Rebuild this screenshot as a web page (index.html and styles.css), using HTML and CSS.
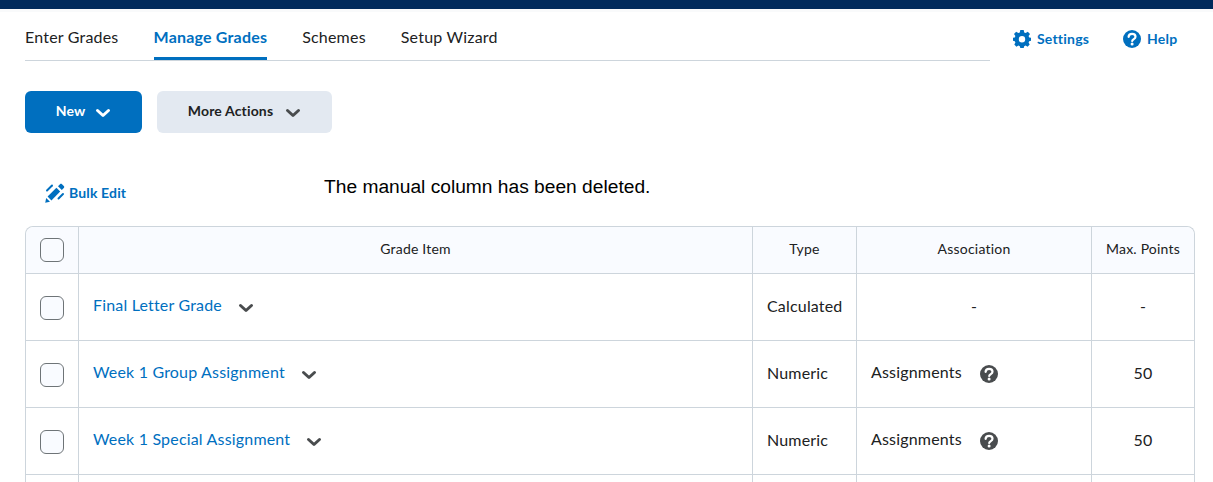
FILE: index.html
```html
<!DOCTYPE html>
<html lang="en">
<head>
  <meta charset="UTF-8" />
  <title>Manage Grades</title>
  <link rel="stylesheet" href="styles.css">
</head>
<body>

<svg class="icon-defs" aria-hidden="true">
  <symbol id="chevron" viewBox="0 0 16 10">
    <path d="M2.5 2.5 L8 7.5 L13.5 2.5" fill="none" stroke="currentColor" stroke-width="3" stroke-linecap="round" stroke-linejoin="round"/>
  </symbol>
  <symbol id="help" viewBox="0 0 18 18">
    <circle cx="9" cy="9" r="9" fill="currentColor"/>
    <path d="M5.6 6.9 C5.7 4.9 7.2 3.8 9.1 3.8 C11.1 3.8 12.5 5 12.5 6.7 C12.5 9 9.4 9 9.2 11" fill="none" stroke="#fff" stroke-width="2.2" stroke-linecap="round"/>
    <circle cx="9.1" cy="14" r="1.5" fill="#fff"/>
  </symbol>
</svg>

<div class="topstrip"></div>

<div class="header">
  <div class="tabs">
    <a class="tab">Enter Grades</a>
    <a class="tab active">Manage Grades</a>
    <a class="tab">Schemes</a>
    <a class="tab">Setup Wizard</a>
  </div>
  <div class="header-links">
    <a class="header-link">
      <svg class="icon-18" viewBox="0 0 18 18">
        <path fill="currentColor" fill-rule="evenodd" d="M7.3 0 H10.7 L11.2 2.5 L12.7 3.1 L14.8 1.7 L17 3.9 L15.6 6 L16.2 7.4 L18 7.8 V10.8 L16.2 11.2 L15.6 12.6 L16.7 14.6 L14.6 16.7 L12.6 15.6 L11.2 16.2 L10.7 18 H7.3 L6.8 16.2 L5.4 15.6 L3.4 16.7 L1.3 14.6 L2.4 12.6 L1.8 11.2 L0 10.8 V7.8 L1.8 7.4 L2.4 6 L1 3.9 L3.2 1.7 L5.3 3.1 L6.8 2.5 Z M9 6 A3.2 3.2 0 1 0 9 12.4 A3.2 3.2 0 1 0 9 6 Z"/>
      </svg>
      Settings
    </a>
    <a class="header-link">
      <svg class="icon-18"><use href="#help"/></svg>
      Help
    </a>
  </div>
</div>

<div class="actions">
  <button class="btn btn-primary"><span>New</span><svg class="chevron"><use href="#chevron"/></svg></button>
  <button class="btn btn-secondary"><span>More Actions</span><svg class="chevron"><use href="#chevron"/></svg></button>
</div>

<div class="toolbar">
  <a class="bulk-edit">
    <svg class="bulk-icon" viewBox="0 0 20 20">
      <path fill="currentColor" d="M0.2 19.8 L1.2 15 L5 18.8 Z"/>
      <path fill="currentColor" d="M2.6 13.6 L11.4 4.8 L15.2 8.6 L6.4 17.4 Z"/>
      <path fill="currentColor" d="M13 3.2 L15 1.2 C15.6 0.6 16.4 0.6 17 1.2 L18.8 3 C19.4 3.6 19.4 4.4 18.8 5 L16.8 7 Z"/>
      <path d="M2 7.5 L7 2.5" fill="none" stroke="currentColor" stroke-width="2" stroke-linecap="round"/>
      <path d="M13.5 15.5 L18 11" fill="none" stroke="currentColor" stroke-width="2" stroke-linecap="round"/>
    </svg>
    Bulk Edit
  </a>
  <div class="message">The manual column has been deleted.</div>
</div>

<div class="table-wrap">
  <table class="grades">
    <colgroup>
      <col class="col-check"><col class="col-name"><col class="col-type"><col class="col-assoc"><col class="col-max">
    </colgroup>
    <thead>
      <tr>
        <th><span class="checkbox"></span></th>
        <th>Grade Item</th>
        <th>Type</th>
        <th>Association</th>
        <th>Max. Points</th>
      </tr>
    </thead>
    <tbody>
      <tr>
        <td><span class="checkbox"></span></td>
        <td class="name"><a>Final Letter Grade</a><svg class="chevron"><use href="#chevron"/></svg></td>
        <td>Calculated</td>
        <td class="center">-</td>
        <td class="center">-</td>
      </tr>
      <tr>
        <td><span class="checkbox"></span></td>
        <td class="name"><a>Week 1 Group Assignment</a><svg class="chevron"><use href="#chevron"/></svg></td>
        <td>Numeric</td>
        <td class="assoc"><span>Assignments</span><svg class="icon-18 help-dark"><use href="#help"/></svg></td>
        <td class="center">50</td>
      </tr>
      <tr>
        <td><span class="checkbox"></span></td>
        <td class="name"><a>Week 1 Special Assignment</a><svg class="chevron"><use href="#chevron"/></svg></td>
        <td>Numeric</td>
        <td class="assoc"><span>Assignments</span><svg class="icon-18 help-dark"><use href="#help"/></svg></td>
        <td class="center">50</td>
      </tr>
      <tr>
        <td></td><td></td><td></td><td></td><td></td>
      </tr>
    </tbody>
  </table>
</div>

</body>
</html>
```

FILE: styles.css
```css
:root {
  --navy: #002a5c;
  --blue: #006fbf;
  --text: #202122;
  --line: #cdd5dc;
  --grey-icon: #494c4e;
}

* { box-sizing: border-box; }

html, body {
  height: 100%;
  overflow: hidden;
}

body {
  margin: 0;
  font-family: Lato, sans-serif;
  color: var(--text);
  background: white;
}

a { color: inherit; }

.icon-defs {
  width: 0;
  height: 0;
  position: absolute;
}

.topstrip {
  height: 12px;
  background: #f9fafb;
  border-top: 9px solid var(--navy);
}

/* Tabs and header links */
.header {
  display: flex;
  padding-left: 25px;
}

.tabs {
  display: flex;
  gap: 35px;
  width: 965px;
  height: 49px;
  border-bottom: 1px solid var(--line);
}

.tab {
  height: 48px;
  padding-top: 15px;
  font-size: 16px;
  line-height: 20px;
  letter-spacing: 0.2px;
}

.tab.active {
  color: var(--blue);
  font-weight: 700;
  border-bottom: 3px solid var(--blue);
}

.header-links {
  display: flex;
  gap: 34px;
  margin-left: 23px;
  padding-top: 18px;
}

.header-link {
  display: flex;
  align-items: flex-start;
  gap: 6px;
  color: var(--blue);
  font-size: 14px;
  font-weight: 700;
  line-height: 18px;
  letter-spacing: 0.2px;
}

.icon-18 {
  display: block;
  width: 18px;
  height: 18px;
  flex: none;
}

/* Buttons */
.actions {
  display: flex;
  gap: 15px;
  margin: 30px 0 0 25px;
}

.btn {
  display: flex;
  align-items: center;
  justify-content: center;
  height: 42px;
  padding: 0;
  border: none;
  border-radius: 6px;
  font-family: inherit;
  font-size: 14px;
  font-weight: 700;
  letter-spacing: 0.15px;
}

.btn span { padding-bottom: 4px; }

.btn-primary {
  width: 117px;
  gap: 10px;
  background: var(--blue);
  color: white;
}

.btn-secondary {
  width: 175px;
  gap: 12px;
  background: #e3e9f1;
  color: var(--text);
}

.chevron {
  display: block;
  width: 16px;
  height: 10px;
  flex: none;
  color: var(--grey-icon);
}

.btn .chevron { margin-top: 2px; }
.btn-primary .chevron { color: white; }

/* Bulk edit row and message */
.toolbar {
  display: flex;
  height: 93px;
  padding: 42px 0 0 45px;
}

.bulk-edit {
  display: flex;
  gap: 4px;
  width: 279px;
  padding-top: 8px;
  color: var(--blue);
  font-size: 14px;
  font-weight: 700;
  line-height: 20px;
  letter-spacing: 0.15px;
}

.bulk-icon {
  width: 20px;
  height: 20px;
  flex: none;
}

.message {
  font-family: "Liberation Sans", Arial, sans-serif;
  font-size: 19.2px;
  line-height: 24px;
  color: black;
}

/* Table */
.table-wrap {
  margin-left: 25px;
  width: 1170px;
}

.grades {
  width: 100%;
  table-layout: fixed;
  border-collapse: separate;
  border-spacing: 0;
  border-top: 1px solid var(--line);
  border-left: 1px solid var(--line);
  border-right: 1px solid var(--line);
  border-radius: 8px 8px 0 0;
}

.col-check { width: 52px; }
.col-name { width: 674px; }
.col-type { width: 104px; }
.col-assoc { width: 235px; }

.grades th {
  height: 47px;
  padding: 0 0 4px;
  background: #f9fbff;
  border-bottom: 1px solid var(--line);
  border-left: 1px solid var(--line);
  font-size: 14px;
  font-weight: 400;
  letter-spacing: 0.2px;
  text-align: center;
}

.grades th:first-child {
  border-left: none;
  border-top-left-radius: 8px;
  padding-bottom: 0;
}

.grades th:last-child { border-top-right-radius: 8px; }

.grades td {
  height: 67px;
  padding: 0 14px 4px;
  border-bottom: 1px solid var(--line);
  border-left: 1px solid var(--line);
  font-size: 16px;
  letter-spacing: 0.18px;
}

.grades td:first-child {
  border-left: none;
  padding: 2px 0 0;
}

.checkbox {
  display: block;
  width: 24px;
  height: 24px;
  margin: 0 auto;
  background: #f9fbff;
  border: 1px solid #6e7477;
  border-radius: 6px;
}

.grades td.name {
  padding-bottom: 5px;
  white-space: nowrap;
}

.name a {
  color: var(--blue);
}

.name .chevron {
  display: inline-block;
  margin-left: 16px;
  vertical-align: -2px;
}

.grades td.center {
  text-align: center;
}

.assoc span {
  vertical-align: 1px;
}

.help-dark {
  display: inline-block;
  margin-left: 18px;
  vertical-align: -4px;
  color: var(--grey-icon);
}
```
